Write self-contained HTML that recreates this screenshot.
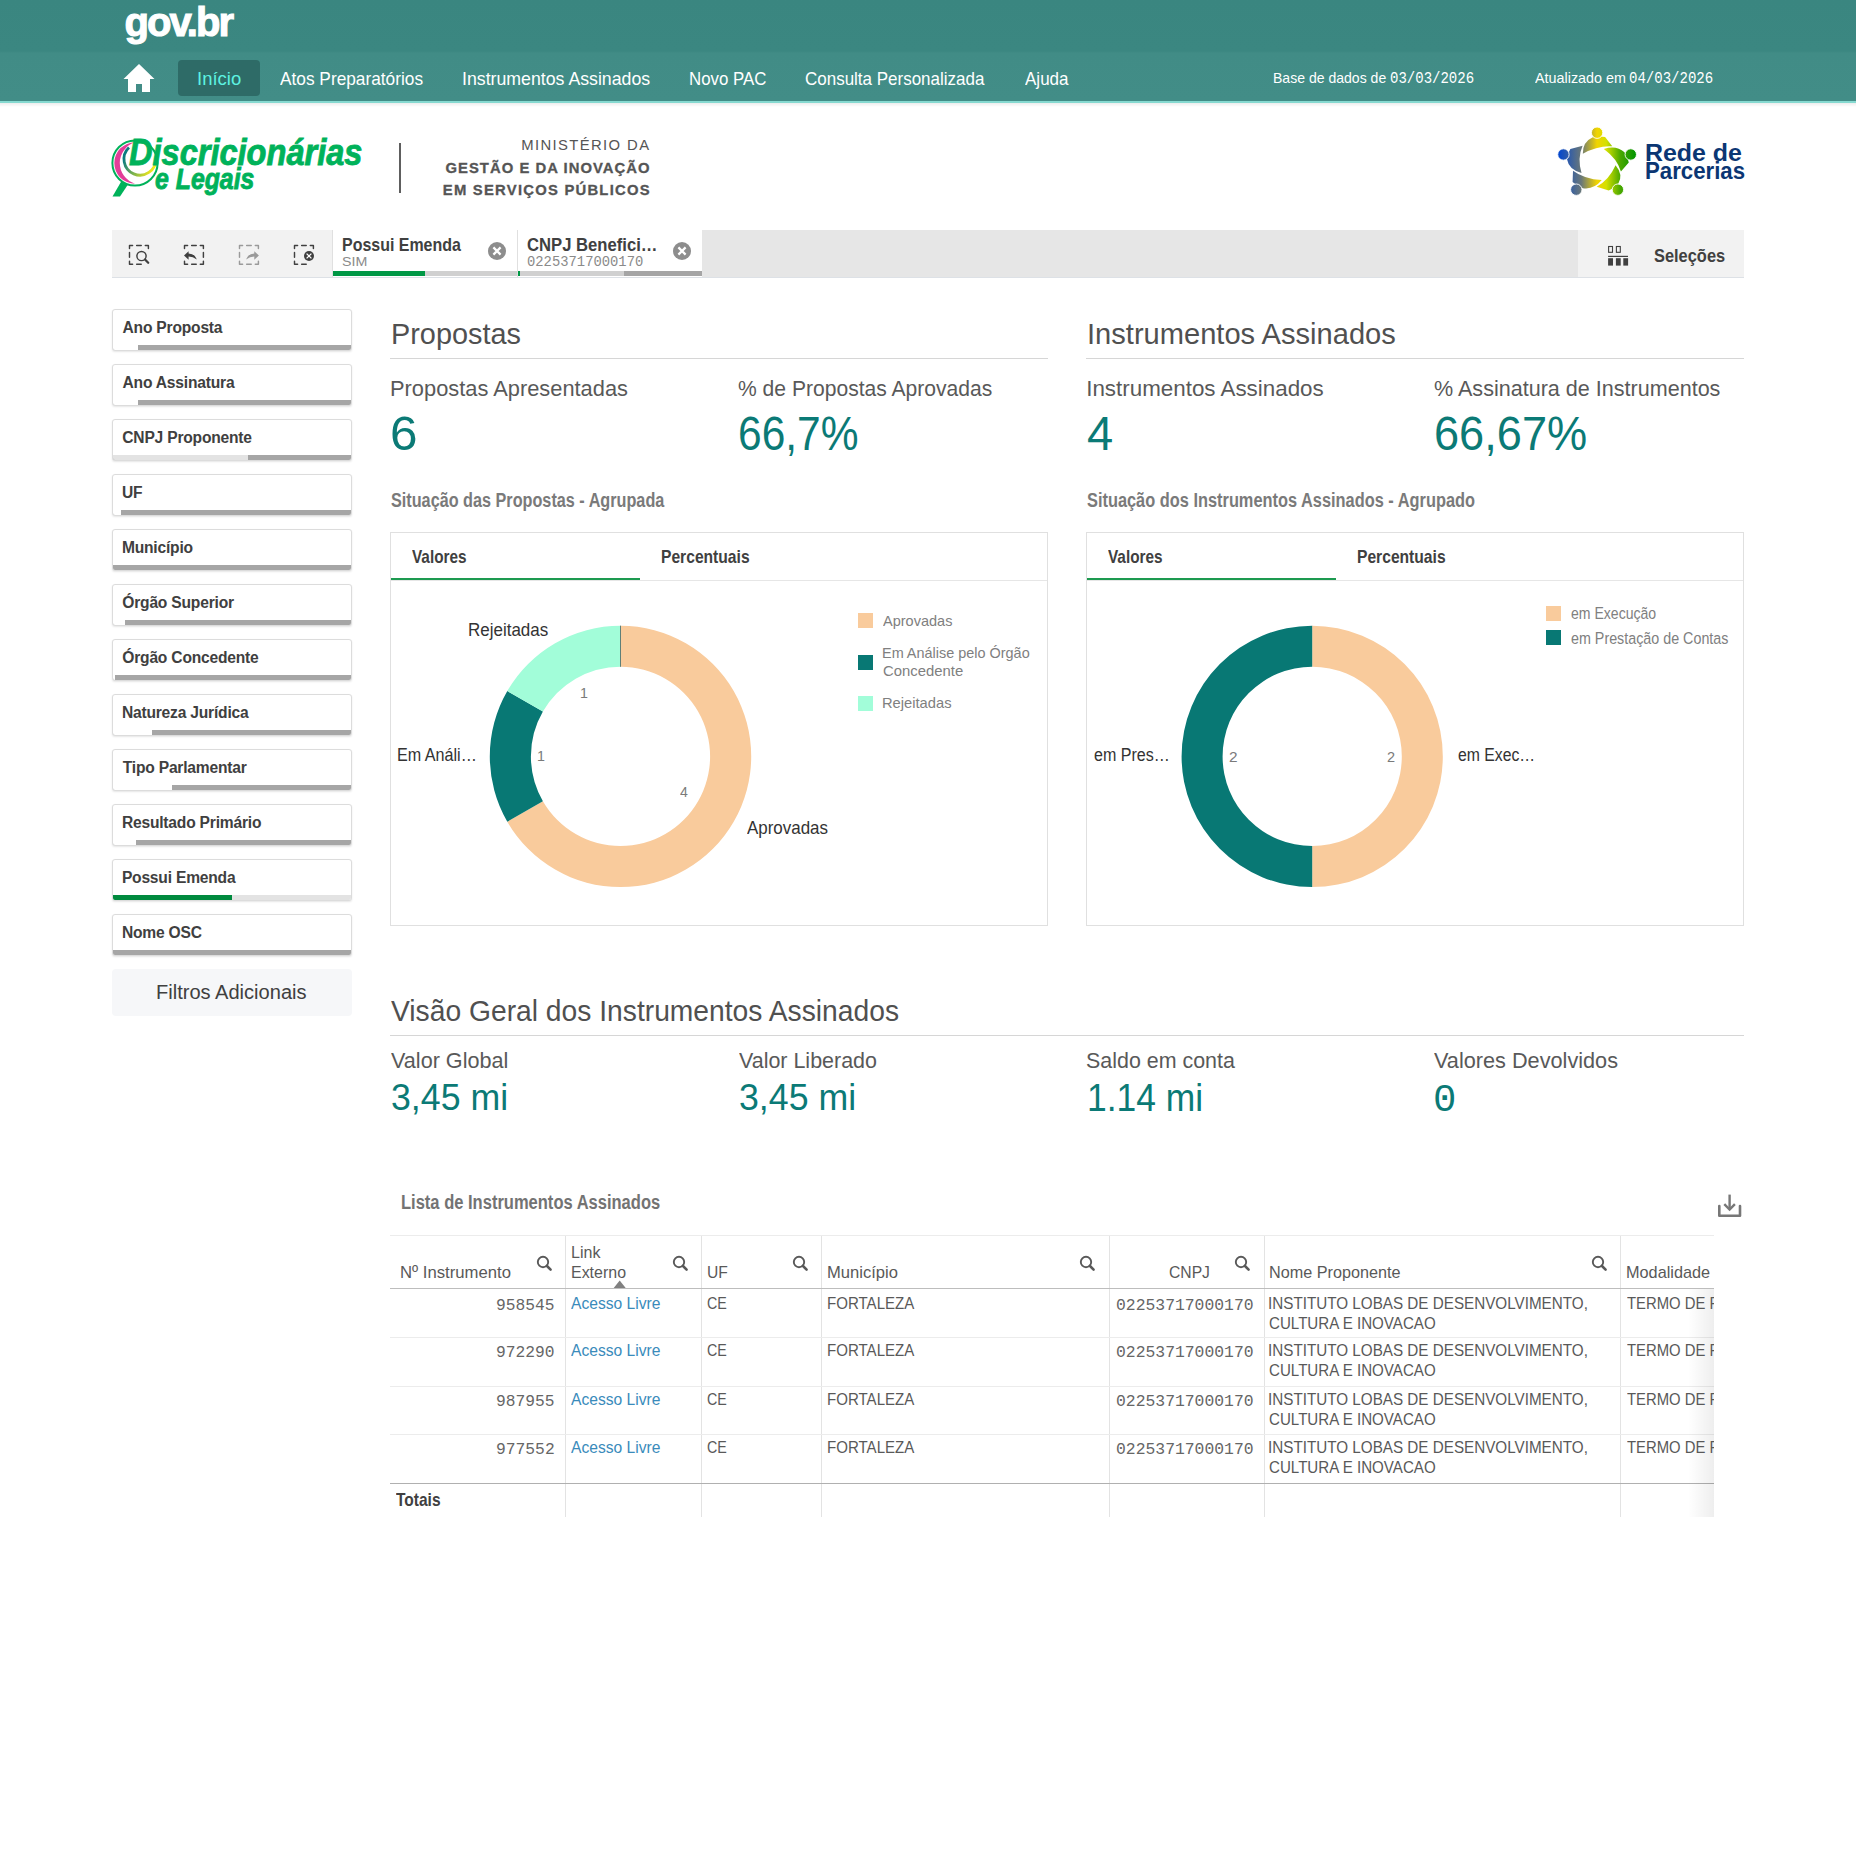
<!DOCTYPE html><html><head><meta charset="utf-8"><style>
html,body{margin:0;padding:0;background:#fff;}
body{width:1856px;height:1876px;position:relative;overflow:hidden;font-family:"Liberation Sans",sans-serif;}
.a{position:absolute;}
.t{position:absolute;line-height:1;white-space:nowrap;}
</style></head><body>
<div class="a" style="left:0;top:0;width:1856px;height:101px;background:linear-gradient(180deg,#3a8680 0px,#3b8781 51px,#418c86 53px,#428d87 101px)"></div>
<div class="a" style="left:0;top:101px;width:1856px;height:2px;background:#86d9d0"></div>
<div class="a" style="left:0;top:103px;width:1856px;height:4px;background:linear-gradient(180deg,rgba(0,0,0,0.07),rgba(0,0,0,0))"></div>
<div class="t" style="left:124.40px;top:2.43px;font-size:40.00px;letter-spacing:-1.900px;color:#ffffff;font-family:'Liberation Sans',sans-serif;font-weight:bold;font-style:normal;-webkit-text-stroke:1.1px #fff">gov.br</div>
<svg class="a" style="left:122px;top:63px" width="34" height="30" viewBox="0 0 34 30"><path d="M17 1 L1.5 16 L6 16 L6 29 L14 29 L14 21 L20 21 L20 29 L28 29 L28 16 L32.5 16 Z" fill="#fff"/></svg>
<div class="a" style="left:178px;top:60px;width:82px;height:36px;background:#2e6b67;border-radius:4px"></div>
<div class="t" style="left:196.84px;top:70.15px;font-size:18.60px;letter-spacing:0.000px;color:#5df2e1;font-family:'Liberation Sans',sans-serif;font-weight:normal;font-style:normal;transform:scaleX(0.9941);transform-origin:0 0;">Início</div>
<div class="t" style="left:280.30px;top:69.55px;font-size:18.60px;letter-spacing:0.000px;color:#ffffff;font-family:'Liberation Sans',sans-serif;font-weight:normal;font-style:normal;transform:scaleX(0.9290);transform-origin:0 0;">Atos Preparatórios</div>
<div class="t" style="left:461.60px;top:69.55px;font-size:18.60px;letter-spacing:0.000px;color:#ffffff;font-family:'Liberation Sans',sans-serif;font-weight:normal;font-style:normal;transform:scaleX(0.9531);transform-origin:0 0;">Instrumentos Assinados</div>
<div class="t" style="left:688.95px;top:69.55px;font-size:18.60px;letter-spacing:0.000px;color:#ffffff;font-family:'Liberation Sans',sans-serif;font-weight:normal;font-style:normal;transform:scaleX(0.9056);transform-origin:0 0;">Novo PAC</div>
<div class="t" style="left:805.15px;top:69.55px;font-size:18.60px;letter-spacing:0.000px;color:#ffffff;font-family:'Liberation Sans',sans-serif;font-weight:normal;font-style:normal;transform:scaleX(0.9134);transform-origin:0 0;">Consulta Personalizada</div>
<div class="t" style="left:1025.00px;top:69.55px;font-size:18.60px;letter-spacing:0.000px;color:#ffffff;font-family:'Liberation Sans',sans-serif;font-weight:normal;font-style:normal;transform:scaleX(0.9151);transform-origin:0 0;">Ajuda</div>
<div class="t" style="left:1273.38px;top:70.25px;font-size:15.41px;letter-spacing:0.000px;color:#ffffff;font-family:'Liberation Sans',sans-serif;font-weight:normal;font-style:normal;transform:scaleX(0.9115);transform-origin:0 0;">Base de dados de</div>
<div class="t" style="left:1389.76px;top:70.97px;font-size:16.09px;letter-spacing:0.000px;color:#ffffff;font-family:'Liberation Mono',monospace;font-weight:normal;font-style:normal;transform:scaleX(0.8716);transform-origin:0 0;">03/03/2026</div>
<div class="t" style="left:1535.00px;top:70.25px;font-size:15.41px;letter-spacing:0.000px;color:#ffffff;font-family:'Liberation Sans',sans-serif;font-weight:normal;font-style:normal;transform:scaleX(0.9309);transform-origin:0 0;">Atualizado em</div>
<div class="t" style="left:1628.66px;top:70.97px;font-size:16.09px;letter-spacing:0.000px;color:#ffffff;font-family:'Liberation Mono',monospace;font-weight:normal;font-style:normal;transform:scaleX(0.8726);transform-origin:0 0;">04/03/2026</div>
<svg class="a" style="left:100px;top:120px" width="300" height="90" viewBox="100 120 300 90">
<defs><linearGradient id="ia" gradientUnits="userSpaceOnUse" x1="128" y1="148" x2="157" y2="160">
<stop offset="0" stop-color="#0a7a80"/><stop offset="0.45" stop-color="#78b050"/><stop offset="1" stop-color="#f4ea1a"/></linearGradient></defs>
<circle cx="135" cy="163" r="22.6" fill="none" stroke="#00b25a" stroke-width="2.0"/>
<path d="M135 142.3 A20.7 20.7 0 0 0 135 183.7 A21.7 21.7 0 0 1 135 142.3 Z" fill="#e23d98"/>
<path d="M129 147.5 A16 16 0 1 0 156 159" fill="none" stroke="url(#ia)" stroke-width="2.8"/>
<path d="M121.5 181 L128 184.5 L120 196.5 L112.5 196.5 Z" fill="#00b25a"/>
</svg>
<div class="t" style="left:128.51px;top:135.04px;font-size:36.92px;letter-spacing:0.000px;color:#00b25a;font-family:'Liberation Sans',sans-serif;font-weight:bold;font-style:italic;transform:scaleX(0.8820);transform-origin:0 0;-webkit-text-stroke:0.9px #00b25a">Discricionárias</div>
<div class="t" style="left:154.75px;top:165.43px;font-size:28.78px;letter-spacing:0.000px;color:#00b25a;font-family:'Liberation Sans',sans-serif;font-weight:bold;font-style:italic;transform:scaleX(0.8634);transform-origin:0 0;-webkit-text-stroke:0.9px #00b25a">e Legais</div>
<div class="a" style="left:399.2px;top:142.5px;width:2.1px;height:50px;background:#5e5e5e;"></div>
<div class="t" style="left:521.21px;top:138.45px;font-size:14.83px;letter-spacing:1.383px;color:#555555;font-family:'Liberation Sans',sans-serif;font-weight:normal;font-style:normal;">MINISTÉRIO DA</div>
<div class="t" style="left:445.41px;top:160.95px;font-size:14.83px;letter-spacing:1.036px;color:#555555;font-family:'Liberation Sans',sans-serif;font-weight:bold;font-style:normal;-webkit-text-stroke:0.3px #555">GESTÃO E DA INOVAÇÃO</div>
<div class="t" style="left:442.84px;top:183.25px;font-size:14.83px;letter-spacing:1.226px;color:#555555;font-family:'Liberation Sans',sans-serif;font-weight:bold;font-style:normal;-webkit-text-stroke:0.3px #555">EM SERVIÇOS PÚBLICOS</div>
<svg class="a" style="left:1550px;top:120px" width="90" height="80" viewBox="1550 120 90 80">
<defs><linearGradient id="rg" gradientUnits="userSpaceOnUse" x1="1558" y1="0" x2="1636" y2="0">
<stop offset="0" stop-color="#0045d0"/><stop offset="0.30" stop-color="#6a7878"/><stop offset="0.50" stop-color="#f2d400"/><stop offset="0.62" stop-color="#d4e000"/><stop offset="0.80" stop-color="#4aa800"/><stop offset="1" stop-color="#009400"/></linearGradient></defs>
<g fill="url(#rg)"><path d="M1592.84 137.35 Q1598.70 135.74 1605.09 136.88 L1612.24 146.27 Q1597.42 145.41 1582.82 153.76 Q1582.60 141.90 1592.84 137.35 Z"/><circle cx="1597.10" cy="132.70" r="5.7" stroke="#fff" stroke-width="0.9"/><path d="M1624.47 152.29 Q1628.01 156.76 1628.77 162.52 L1620.94 171.47 Q1617.27 158.67 1603.84 148.88 Q1616.44 145.04 1624.47 152.29 Z"/><circle cx="1630.76" cy="154.47" r="5.7" stroke="#fff" stroke-width="0.9"/><path d="M1618.28 183.69 Q1614.60 188.06 1608.68 190.49 L1596.70 186.63 Q1609.25 179.56 1615.55 165.17 Q1623.55 174.65 1618.28 183.69 Z"/><circle cx="1617.90" cy="189.68" r="5.7" stroke="#fff" stroke-width="0.9"/><path d="M1582.82 188.15 Q1577.01 186.39 1572.59 182.12 L1573.01 170.79 Q1584.44 179.23 1601.76 180.12 Q1594.10 189.82 1582.82 188.15 Z"/><circle cx="1576.30" cy="189.68" r="5.7" stroke="#fff" stroke-width="0.9"/><path d="M1567.09 159.51 Q1567.18 154.05 1570.37 148.99 L1582.62 145.85 Q1577.13 158.12 1581.53 173.07 Q1568.80 169.58 1567.09 159.51 Z"/><circle cx="1563.44" cy="154.47" r="5.7" stroke="#fff" stroke-width="0.9"/></g></svg>
<div class="t" style="left:1644.58px;top:140.67px;font-size:24.13px;letter-spacing:0.000px;color:#0b3673;font-family:'Liberation Sans',sans-serif;font-weight:bold;font-style:normal;transform:scaleX(1.0331);transform-origin:0 0;">Rede de</div>
<div class="t" style="left:1644.76px;top:160.41px;font-size:23.26px;letter-spacing:0.000px;color:#0b3673;font-family:'Liberation Sans',sans-serif;font-weight:bold;font-style:normal;transform:scaleX(0.9558);transform-origin:0 0;">Parcerias</div>
<div class="a" style="left:112px;top:230px;width:1632px;height:47px;background:#e6e6e6;"></div>
<div class="a" style="left:112px;top:277px;width:1632px;height:1px;background:#dde1e6;"></div>
<div class="a" style="left:112px;top:230px;width:220px;height:47px;background:#f2f2f2;"></div>
<div class="a" style="left:1578px;top:230px;width:166px;height:47px;background:#f2f2f2;"></div>
<svg class="a" style="left:112px;top:230px" width="220" height="47" viewBox="112 230 220 47"><path d="M129.5 248.5 L129.5 245.4 L132.6 245.4 M145.3 245.4 L148.4 245.4 L148.4 248.5 M132.6 264.3 L129.5 264.3 L129.5 261.2 M136.64999999999998 245.4 L141.25 245.4 M136.64999999999998 264.3 L141.25 264.3 M129.5 252.54999999999998 L129.5 257.15" fill="none" stroke="#404040" stroke-width="1.45" stroke-linejoin="round" stroke-linecap="round"/><circle cx="141.5" cy="256" r="4.6" fill="none" stroke="#404040" stroke-width="1.45"/><path d="M145 259.5 L148.2 262.7" stroke="#404040" stroke-width="2.3" stroke-linecap="round"/><path d="M184.5 248.5 L184.5 245.4 L187.6 245.4 M200.3 245.4 L203.4 245.4 L203.4 248.5 M203.4 261.2 L203.4 264.3 L200.3 264.3 M187.6 264.3 L184.5 264.3 L184.5 261.2 M191.64999999999998 245.4 L196.25 245.4 M191.64999999999998 264.3 L196.25 264.3 M203.4 252.54999999999998 L203.4 257.15" fill="none" stroke="#404040" stroke-width="1.45" stroke-linejoin="round" stroke-linecap="round"/><path d="M184 255.5 L188.6 251.2 L188.6 253.4 Q194.5 253.4 196.8 259.6 Q193 256.6 188.6 256.6 L188.6 259.8 Z" fill="#404040"/><path d="M239.5 248.5 L239.5 245.4 L242.6 245.4 M255.29999999999998 245.4 L258.4 245.4 L258.4 248.5 M258.4 261.2 L258.4 264.3 L255.29999999999998 264.3 M242.6 264.3 L239.5 264.3 L239.5 261.2 M246.64999999999998 245.4 L251.25 245.4 M246.64999999999998 264.3 L251.25 264.3 M239.5 252.54999999999998 L239.5 257.15" fill="none" stroke="#9a9a9a" stroke-width="1.45" stroke-linejoin="round" stroke-linecap="round"/><path d="M258.9 255.5 L254.3 251.2 L254.3 253.4 Q248.4 253.4 246.1 259.6 Q249.9 256.6 254.3 256.6 L254.3 259.8 Z" fill="#9a9a9a"/><path d="M294.5 248.5 L294.5 245.4 L297.6 245.4 M310.29999999999995 245.4 L313.4 245.4 L313.4 248.5 M297.6 264.3 L294.5 264.3 L294.5 261.2 M301.65 245.4 L306.25 245.4 M301.65 264.3 L306.25 264.3 M294.5 252.54999999999998 L294.5 257.15" fill="none" stroke="#404040" stroke-width="1.45" stroke-linejoin="round" stroke-linecap="round"/><circle cx="309" cy="256" r="5" fill="#404040"/><path d="M306.6 253.6 L311.4 258.4 M311.4 253.6 L306.6 258.4" stroke="#fff" stroke-width="1.3"/></svg>
<div class="a" style="left:332px;top:230px;width:185.5px;height:47px;background:#ffffff;"></div>
<div class="a" style="left:332px;top:230px;width:1px;height:47px;background:#e0e0e0;"></div>
<div class="a" style="left:333px;top:271px;width:92px;height:5px;background:#009845;"></div>
<div class="a" style="left:425px;top:271px;width:92px;height:5px;background:#d0d0d0;"></div>
<div class="t" style="left:341.76px;top:235.92px;font-size:18.17px;letter-spacing:0.000px;color:#404040;font-family:'Liberation Sans',sans-serif;font-weight:bold;font-style:normal;transform:scaleX(0.8789);transform-origin:0 0;">Possui Emenda</div>
<div class="t" style="left:342.16px;top:255.18px;font-size:13.37px;letter-spacing:0.000px;color:#8a8a8a;font-family:'Liberation Sans',sans-serif;font-weight:normal;font-style:normal;transform:scaleX(1.0651);transform-origin:0 0;">SIM</div>
<div class="a" style="left:517.5px;top:230px;width:184.5px;height:47px;background:#ffffff;"></div>
<div class="a" style="left:517px;top:230px;width:1px;height:47px;background:#e0e0e0;"></div>
<div class="a" style="left:518px;top:271px;width:2px;height:5px;background:#009845;"></div>
<div class="a" style="left:520px;top:271px;width:104px;height:5px;background:#d0d0d0;"></div>
<div class="a" style="left:624px;top:271px;width:78px;height:5px;background:#a5a5a5;"></div>
<div class="t" style="left:527.33px;top:236.02px;font-size:18.17px;letter-spacing:0.000px;color:#404040;font-family:'Liberation Sans',sans-serif;font-weight:bold;font-style:normal;transform:scaleX(0.9167);transform-origin:0 0;">CNPJ Benefici…</div>
<div class="t" style="left:527.17px;top:255.25px;font-size:14.42px;letter-spacing:0.000px;color:#8a8a8a;font-family:'Liberation Mono',monospace;font-weight:normal;font-style:normal;transform:scaleX(0.9605);transform-origin:0 0;">02253717000170</div>
<svg class="a" style="left:487px;top:241.3px" width="20" height="20" viewBox="-10 -10 20 20"><circle r="9" fill="#8d8d8d"/><path d="M-3.6 -3.6 L3.6 3.6 M3.6 -3.6 L-3.6 3.6" stroke="#fff" stroke-width="2.2"/></svg>
<svg class="a" style="left:672px;top:241.2px" width="20" height="20" viewBox="-10 -10 20 20"><circle r="9" fill="#8d8d8d"/><path d="M-3.6 -3.6 L3.6 3.6 M3.6 -3.6 L-3.6 3.6" stroke="#fff" stroke-width="2.2"/></svg>
<svg class="a" style="left:1600px;top:240px" width="36" height="32" viewBox="1600 240 36 32"><rect x="1608.6" y="246.5" width="3.9" height="5.8" fill="none" stroke="#404040" stroke-width="1.1"/><rect x="1616.4" y="246.5" width="3.9" height="5.8" fill="none" stroke="#404040" stroke-width="1.1"/><rect x="1608.1" y="255.8" width="19.9" height="1.2" fill="#404040"/><rect x="1608.1" y="258.2" width="4.9" height="7.4" fill="#404040"/><rect x="1615.9" y="258.2" width="4.8" height="7.4" fill="#404040"/><rect x="1623.3" y="258.2" width="4.8" height="7.4" fill="#404040"/></svg>
<div class="t" style="left:1654.01px;top:246.85px;font-size:18.60px;letter-spacing:0.000px;color:#404040;font-family:'Liberation Sans',sans-serif;font-weight:bold;font-style:normal;transform:scaleX(0.8822);transform-origin:0 0;">Seleções</div>
<div class="a" style="left:112px;top:309px;width:238px;height:40px;border:1px solid #dcdcdc;border-radius:3px;background:#fff;overflow:hidden;box-shadow:0 1px 2px rgba(0,0,0,0.10)"><div class="a" style="left:0;top:35px;width:238px;height:5px;background:#a6a6a6"></div><div class="a" style="left:0;top:35px;width:25px;height:5px;background:#ffffff"></div></div>
<div class="t" style="left:122.51px;top:320.19px;font-size:15.60px;letter-spacing:0.000px;color:#404040;font-family:'Liberation Sans',sans-serif;font-weight:bold;font-style:normal;letter-spacing:-0.2px">Ano Proposta</div>
<div class="a" style="left:112px;top:364px;width:238px;height:40px;border:1px solid #dcdcdc;border-radius:3px;background:#fff;overflow:hidden;box-shadow:0 1px 2px rgba(0,0,0,0.10)"><div class="a" style="left:0;top:35px;width:238px;height:5px;background:#a6a6a6"></div><div class="a" style="left:0;top:35px;width:25px;height:5px;background:#ffffff"></div></div>
<div class="t" style="left:122.51px;top:375.19px;font-size:15.60px;letter-spacing:0.000px;color:#404040;font-family:'Liberation Sans',sans-serif;font-weight:bold;font-style:normal;letter-spacing:-0.2px">Ano Assinatura</div>
<div class="a" style="left:112px;top:419px;width:238px;height:40px;border:1px solid #dcdcdc;border-radius:3px;background:#fff;overflow:hidden;box-shadow:0 1px 2px rgba(0,0,0,0.10)"><div class="a" style="left:0;top:35px;width:238px;height:5px;background:#a6a6a6"></div><div class="a" style="left:0;top:35px;width:135px;height:5px;background:#e3e3e3"></div></div>
<div class="t" style="left:122.28px;top:430.19px;font-size:15.60px;letter-spacing:0.000px;color:#404040;font-family:'Liberation Sans',sans-serif;font-weight:bold;font-style:normal;letter-spacing:-0.2px">CNPJ Proponente</div>
<div class="a" style="left:112px;top:474px;width:238px;height:40px;border:1px solid #dcdcdc;border-radius:3px;background:#fff;overflow:hidden;box-shadow:0 1px 2px rgba(0,0,0,0.10)"><div class="a" style="left:0;top:35px;width:238px;height:5px;background:#a6a6a6"></div><div class="a" style="left:0;top:35px;width:8px;height:5px;background:#ffffff"></div></div>
<div class="t" style="left:121.96px;top:485.19px;font-size:15.60px;letter-spacing:0.000px;color:#404040;font-family:'Liberation Sans',sans-serif;font-weight:bold;font-style:normal;letter-spacing:-0.2px">UF</div>
<div class="a" style="left:112px;top:529px;width:238px;height:40px;border:1px solid #dcdcdc;border-radius:3px;background:#fff;overflow:hidden;box-shadow:0 1px 2px rgba(0,0,0,0.10)"><div class="a" style="left:0;top:35px;width:238px;height:5px;background:#a6a6a6"></div><div class="a" style="left:0;top:35px;width:0px;height:5px;background:#ffffff"></div></div>
<div class="t" style="left:121.89px;top:540.19px;font-size:15.60px;letter-spacing:0.000px;color:#404040;font-family:'Liberation Sans',sans-serif;font-weight:bold;font-style:normal;letter-spacing:-0.2px">Município</div>
<div class="a" style="left:112px;top:584px;width:238px;height:40px;border:1px solid #dcdcdc;border-radius:3px;background:#fff;overflow:hidden;box-shadow:0 1px 2px rgba(0,0,0,0.10)"><div class="a" style="left:0;top:35px;width:238px;height:5px;background:#a6a6a6"></div><div class="a" style="left:0;top:35px;width:12px;height:5px;background:#ffffff"></div></div>
<div class="t" style="left:122.28px;top:595.19px;font-size:15.60px;letter-spacing:0.000px;color:#404040;font-family:'Liberation Sans',sans-serif;font-weight:bold;font-style:normal;letter-spacing:-0.2px">Órgão Superior</div>
<div class="a" style="left:112px;top:639px;width:238px;height:40px;border:1px solid #dcdcdc;border-radius:3px;background:#fff;overflow:hidden;box-shadow:0 1px 2px rgba(0,0,0,0.10)"><div class="a" style="left:0;top:35px;width:238px;height:5px;background:#a6a6a6"></div><div class="a" style="left:0;top:35px;width:2px;height:5px;background:#ffffff"></div></div>
<div class="t" style="left:122.28px;top:650.19px;font-size:15.60px;letter-spacing:0.000px;color:#404040;font-family:'Liberation Sans',sans-serif;font-weight:bold;font-style:normal;letter-spacing:-0.2px">Órgão Concedente</div>
<div class="a" style="left:112px;top:694px;width:238px;height:40px;border:1px solid #dcdcdc;border-radius:3px;background:#fff;overflow:hidden;box-shadow:0 1px 2px rgba(0,0,0,0.10)"><div class="a" style="left:0;top:35px;width:238px;height:5px;background:#a6a6a6"></div><div class="a" style="left:0;top:35px;width:39px;height:5px;background:#ffffff"></div></div>
<div class="t" style="left:121.89px;top:705.19px;font-size:15.60px;letter-spacing:0.000px;color:#404040;font-family:'Liberation Sans',sans-serif;font-weight:bold;font-style:normal;letter-spacing:-0.2px">Natureza Jurídica</div>
<div class="a" style="left:112px;top:749px;width:238px;height:40px;border:1px solid #dcdcdc;border-radius:3px;background:#fff;overflow:hidden;box-shadow:0 1px 2px rgba(0,0,0,0.10)"><div class="a" style="left:0;top:35px;width:238px;height:5px;background:#a6a6a6"></div><div class="a" style="left:0;top:35px;width:59px;height:5px;background:#ffffff"></div></div>
<div class="t" style="left:122.74px;top:760.19px;font-size:15.60px;letter-spacing:0.000px;color:#404040;font-family:'Liberation Sans',sans-serif;font-weight:bold;font-style:normal;letter-spacing:-0.2px">Tipo Parlamentar</div>
<div class="a" style="left:112px;top:804px;width:238px;height:40px;border:1px solid #dcdcdc;border-radius:3px;background:#fff;overflow:hidden;box-shadow:0 1px 2px rgba(0,0,0,0.10)"><div class="a" style="left:0;top:35px;width:238px;height:5px;background:#a6a6a6"></div><div class="a" style="left:0;top:35px;width:23px;height:5px;background:#ffffff"></div></div>
<div class="t" style="left:121.89px;top:815.19px;font-size:15.60px;letter-spacing:0.000px;color:#404040;font-family:'Liberation Sans',sans-serif;font-weight:bold;font-style:normal;letter-spacing:-0.2px">Resultado Primário</div>
<div class="a" style="left:112px;top:859px;width:238px;height:40px;border:1px solid #dcdcdc;border-radius:3px;background:#fff;overflow:hidden;box-shadow:0 1px 2px rgba(0,0,0,0.10)"><div class="a" style="left:0;top:35px;width:238px;height:5px;background:#e3e3e3"></div><div class="a" style="left:0;top:35px;width:119px;height:5px;background:#008a3e"></div></div>
<div class="t" style="left:121.89px;top:870.19px;font-size:15.60px;letter-spacing:0.000px;color:#404040;font-family:'Liberation Sans',sans-serif;font-weight:bold;font-style:normal;letter-spacing:-0.2px">Possui Emenda</div>
<div class="a" style="left:112px;top:914px;width:238px;height:40px;border:1px solid #dcdcdc;border-radius:3px;background:#fff;overflow:hidden;box-shadow:0 1px 2px rgba(0,0,0,0.10)"><div class="a" style="left:0;top:35px;width:238px;height:5px;background:#a6a6a6"></div><div class="a" style="left:0;top:35px;width:0px;height:5px;background:#ffffff"></div></div>
<div class="t" style="left:121.89px;top:925.19px;font-size:15.60px;letter-spacing:0.000px;color:#404040;font-family:'Liberation Sans',sans-serif;font-weight:bold;font-style:normal;letter-spacing:-0.2px">Nome OSC</div>
<div class="a" style="left:112px;top:969px;width:240px;height:47px;background:#f6f7f9;border-radius:4px"></div>
<div class="t" style="left:156.39px;top:981.77px;font-size:20.35px;letter-spacing:0.000px;color:#404040;font-family:'Liberation Sans',sans-serif;font-weight:normal;font-style:normal;transform:scaleX(0.9862);transform-origin:0 0;">Filtros Adicionais</div>
<div class="t" style="left:390.99px;top:319.03px;font-size:30.09px;letter-spacing:0.000px;color:#505050;font-family:'Liberation Sans',sans-serif;font-weight:normal;font-style:normal;transform:scaleX(0.9592);transform-origin:0 0;">Propostas</div>
<div class="a" style="left:390px;top:358px;width:658px;height:1px;background:#d6d6d6;"></div>
<div class="t" style="left:390.45px;top:377.55px;font-size:22.38px;letter-spacing:0.000px;color:#595959;font-family:'Liberation Sans',sans-serif;font-weight:normal;font-style:normal;transform:scaleX(0.9760);transform-origin:0 0;">Propostas Apresentadas</div>
<div class="t" style="left:389.53px;top:408.97px;font-size:48.69px;letter-spacing:0.000px;color:#0b7a76;font-family:'Liberation Sans',sans-serif;font-weight:normal;font-style:normal;transform:scaleX(1.0158);transform-origin:0 0;">6</div>
<div class="t" style="left:738.26px;top:377.55px;font-size:22.38px;letter-spacing:0.000px;color:#595959;font-family:'Liberation Sans',sans-serif;font-weight:normal;font-style:normal;transform:scaleX(0.9423);transform-origin:0 0;">% de Propostas Aprovadas</div>
<div class="t" style="left:738.37px;top:408.97px;font-size:48.69px;letter-spacing:0.000px;color:#0b7a76;font-family:'Liberation Sans',sans-serif;font-weight:normal;font-style:normal;transform:scaleX(0.8730);transform-origin:0 0;">66,7%</div>
<div class="t" style="left:390.51px;top:491.23px;font-size:19.33px;letter-spacing:0.000px;color:#7a7a7a;font-family:'Liberation Sans',sans-serif;font-weight:bold;font-style:normal;transform:scaleX(0.8389);transform-origin:0 0;">Situação das Propostas - Agrupada</div>
<div class="t" style="left:1086.68px;top:319.03px;font-size:30.09px;letter-spacing:0.000px;color:#505050;font-family:'Liberation Sans',sans-serif;font-weight:normal;font-style:normal;transform:scaleX(0.9670);transform-origin:0 0;">Instrumentos Assinados</div>
<div class="a" style="left:1086px;top:358px;width:658px;height:1px;background:#d6d6d6;"></div>
<div class="t" style="left:1086.19px;top:377.55px;font-size:22.38px;letter-spacing:0.000px;color:#595959;font-family:'Liberation Sans',sans-serif;font-weight:normal;font-style:normal;">Instrumentos Assinados</div>
<div class="t" style="left:1087.06px;top:408.97px;font-size:48.69px;letter-spacing:0.000px;color:#0b7a76;font-family:'Liberation Sans',sans-serif;font-weight:normal;font-style:normal;transform:scaleX(0.9665);transform-origin:0 0;">4</div>
<div class="t" style="left:1434.25px;top:377.55px;font-size:22.38px;letter-spacing:0.000px;color:#595959;font-family:'Liberation Sans',sans-serif;font-weight:normal;font-style:normal;transform:scaleX(0.9635);transform-origin:0 0;">% Assinatura de Instrumentos</div>
<div class="t" style="left:1434.24px;top:408.97px;font-size:48.69px;letter-spacing:0.000px;color:#0b7a76;font-family:'Liberation Sans',sans-serif;font-weight:normal;font-style:normal;transform:scaleX(0.9276);transform-origin:0 0;">66,67%</div>
<div class="t" style="left:1086.51px;top:491.23px;font-size:19.33px;letter-spacing:0.000px;color:#7a7a7a;font-family:'Liberation Sans',sans-serif;font-weight:bold;font-style:normal;transform:scaleX(0.8468);transform-origin:0 0;">Situação dos Instrumentos Assinados - Agrupado</div>
<div class="a" style="left:390px;top:532px;width:656px;height:392px;border:1px solid #e0e0e0;background:#fff"></div>
<div class="a" style="left:391px;top:579.5px;width:656px;height:1px;background:#e6e6e6;"></div>
<div class="a" style="left:391px;top:578px;width:249px;height:2px;background:#1d9a50;"></div>
<div class="t" style="left:412.12px;top:548.04px;font-size:18.02px;letter-spacing:0.000px;color:#404040;font-family:'Liberation Sans',sans-serif;font-weight:bold;font-style:normal;transform:scaleX(0.8504);transform-origin:0 0;">Valores</div>
<div class="t" style="left:660.98px;top:548.04px;font-size:18.02px;letter-spacing:0.000px;color:#404040;font-family:'Liberation Sans',sans-serif;font-weight:bold;font-style:normal;transform:scaleX(0.8674);transform-origin:0 0;">Percentuais</div>
<div class="a" style="left:1086px;top:532px;width:656px;height:392px;border:1px solid #e0e0e0;background:#fff"></div>
<div class="a" style="left:1087px;top:579.5px;width:656px;height:1px;background:#e6e6e6;"></div>
<div class="a" style="left:1087px;top:578px;width:249px;height:2px;background:#1d9a50;"></div>
<div class="t" style="left:1108.12px;top:548.04px;font-size:18.02px;letter-spacing:0.000px;color:#404040;font-family:'Liberation Sans',sans-serif;font-weight:bold;font-style:normal;transform:scaleX(0.8504);transform-origin:0 0;">Valores</div>
<div class="t" style="left:1356.98px;top:548.04px;font-size:18.02px;letter-spacing:0.000px;color:#404040;font-family:'Liberation Sans',sans-serif;font-weight:bold;font-style:normal;transform:scaleX(0.8674);transform-origin:0 0;">Percentuais</div>
<svg class="a" style="left:0;top:0" width="1856" height="1000" viewBox="0 0 1856 1000"><path d="M620.50 625.70 A130.7 130.7 0 1 1 507.31 821.75 L542.90 801.20 A89.6 89.6 0 1 0 620.50 666.80 Z" fill="#f9cb9c"/><path d="M507.31 821.75 A130.7 130.7 0 0 1 507.31 691.05 L542.90 711.60 A89.6 89.6 0 0 0 542.90 801.20 Z" fill="#087874"/><path d="M507.31 691.05 A130.7 130.7 0 0 1 620.50 625.70 L620.50 666.80 A89.6 89.6 0 0 0 542.90 711.60 Z" fill="#a2fdd9"/><rect x="620.0" y="625.7" width="1" height="41.099999999999994" fill="#5f7f78"/><path d="M1312.20 625.70 A130.7 130.7 0 0 1 1312.20 887.10 L1312.20 846.00 A89.6 89.6 0 0 0 1312.20 666.80 Z" fill="#f9cb9c"/><path d="M1312.20 887.10 A130.7 130.7 0 0 1 1312.20 625.70 L1312.20 666.80 A89.6 89.6 0 0 0 1312.20 846.00 Z" fill="#087874"/></svg>
<div class="t" style="left:468.14px;top:621.34px;font-size:18.02px;letter-spacing:0.000px;color:#333333;font-family:'Liberation Sans',sans-serif;font-weight:normal;font-style:normal;transform:scaleX(0.9424);transform-origin:0 0;">Rejeitadas</div>
<div class="t" style="left:397.21px;top:746.02px;font-size:18.17px;letter-spacing:0.000px;color:#333333;font-family:'Liberation Sans',sans-serif;font-weight:normal;font-style:normal;transform:scaleX(0.8890);transform-origin:0 0;">Em Análi…</div>
<div class="t" style="left:746.60px;top:819.25px;font-size:18.60px;letter-spacing:0.000px;color:#333333;font-family:'Liberation Sans',sans-serif;font-weight:normal;font-style:normal;transform:scaleX(0.9107);transform-origin:0 0;">Aprovadas</div>
<div class="t" style="left:579.63px;top:685.75px;font-size:14.83px;letter-spacing:0.000px;color:#7a7a7a;font-family:'Liberation Sans',sans-serif;font-weight:normal;font-style:normal;transform:scaleX(0.9614);transform-origin:0 0;">1</div>
<div class="t" style="left:537.13px;top:748.55px;font-size:14.83px;letter-spacing:0.000px;color:#7a7a7a;font-family:'Liberation Sans',sans-serif;font-weight:normal;font-style:normal;transform:scaleX(0.9614);transform-origin:0 0;">1</div>
<div class="t" style="left:679.82px;top:784.82px;font-size:14.97px;letter-spacing:0.000px;color:#7a7a7a;font-family:'Liberation Sans',sans-serif;font-weight:normal;font-style:normal;transform:scaleX(0.9430);transform-origin:0 0;">4</div>
<div class="a" style="left:858px;top:613.3px;width:15px;height:15px;background:#f9cb9c;"></div>
<div class="a" style="left:858px;top:654.8px;width:15px;height:15px;background:#087874;"></div>
<div class="a" style="left:858px;top:695.7px;width:15px;height:15px;background:#a2fdd9;"></div>
<div class="t" style="left:883.30px;top:613.35px;font-size:15.41px;letter-spacing:0.000px;color:#808080;font-family:'Liberation Sans',sans-serif;font-weight:normal;font-style:normal;transform:scaleX(0.9425);transform-origin:0 0;">Aprovadas</div>
<div class="t" style="left:882.14px;top:645.35px;font-size:15.41px;letter-spacing:0.000px;color:#808080;font-family:'Liberation Sans',sans-serif;font-weight:normal;font-style:normal;transform:scaleX(0.9371);transform-origin:0 0;">Em Análise pelo Órgão</div>
<div class="t" style="left:882.56px;top:663.35px;font-size:15.41px;letter-spacing:0.000px;color:#808080;font-family:'Liberation Sans',sans-serif;font-weight:normal;font-style:normal;transform:scaleX(0.9650);transform-origin:0 0;">Concedente</div>
<div class="t" style="left:882.12px;top:695.05px;font-size:15.41px;letter-spacing:0.000px;color:#808080;font-family:'Liberation Sans',sans-serif;font-weight:normal;font-style:normal;transform:scaleX(0.9546);transform-origin:0 0;">Rejeitadas</div>
<div class="t" style="left:1093.56px;top:746.34px;font-size:18.02px;letter-spacing:0.000px;color:#333333;font-family:'Liberation Sans',sans-serif;font-weight:normal;font-style:normal;transform:scaleX(0.8914);transform-origin:0 0;">em Pres…</div>
<div class="t" style="left:1457.57px;top:746.34px;font-size:18.02px;letter-spacing:0.000px;color:#333333;font-family:'Liberation Sans',sans-serif;font-weight:normal;font-style:normal;transform:scaleX(0.8755);transform-origin:0 0;">em Exec…</div>
<div class="t" style="left:1228.93px;top:748.50px;font-size:15.12px;letter-spacing:0.000px;color:#7a7a7a;font-family:'Liberation Sans',sans-serif;font-weight:normal;font-style:normal;transform:scaleX(1.0178);transform-origin:0 0;">2</div>
<div class="t" style="left:1386.67px;top:748.50px;font-size:15.12px;letter-spacing:0.000px;color:#7a7a7a;font-family:'Liberation Sans',sans-serif;font-weight:normal;font-style:normal;transform:scaleX(0.9596);transform-origin:0 0;">2</div>
<div class="a" style="left:1546px;top:605.5px;width:15px;height:15px;background:#f9cb9c;"></div>
<div class="a" style="left:1546px;top:630.3px;width:15px;height:15px;background:#087874;"></div>
<div class="t" style="left:1571.14px;top:604.94px;font-size:16.13px;letter-spacing:0.000px;color:#808080;font-family:'Liberation Sans',sans-serif;font-weight:normal;font-style:normal;transform:scaleX(0.8727);transform-origin:0 0;">em Execução</div>
<div class="t" style="left:1571.13px;top:629.64px;font-size:16.13px;letter-spacing:0.000px;color:#808080;font-family:'Liberation Sans',sans-serif;font-weight:normal;font-style:normal;transform:scaleX(0.8880);transform-origin:0 0;">em Prestação de Contas</div>
<div class="t" style="left:390.86px;top:996.66px;font-size:28.63px;letter-spacing:0.000px;color:#505050;font-family:'Liberation Sans',sans-serif;font-weight:normal;font-style:normal;transform:scaleX(0.9864);transform-origin:0 0;">Visão Geral dos Instrumentos Assinados</div>
<div class="a" style="left:390px;top:1034.5px;width:1354px;height:1px;background:#d6d6d6;"></div>
<div class="t" style="left:390.69px;top:1049.18px;font-size:22.82px;letter-spacing:0.000px;color:#595959;font-family:'Liberation Sans',sans-serif;font-weight:normal;font-style:normal;transform:scaleX(0.9476);transform-origin:0 0;">Valor Global</div>
<div class="t" style="left:391.35px;top:1079.45px;font-size:37.50px;letter-spacing:0.000px;color:#0b7a76;font-family:'Liberation Sans',sans-serif;font-weight:normal;font-style:normal;transform:scaleX(0.9524);transform-origin:0 0;">3,45 mi</div>
<div class="t" style="left:739.39px;top:1049.18px;font-size:22.82px;letter-spacing:0.000px;color:#595959;font-family:'Liberation Sans',sans-serif;font-weight:normal;font-style:normal;transform:scaleX(0.9403);transform-origin:0 0;">Valor Liberado</div>
<div class="t" style="left:739.35px;top:1079.45px;font-size:37.50px;letter-spacing:0.000px;color:#0b7a76;font-family:'Liberation Sans',sans-serif;font-weight:normal;font-style:normal;transform:scaleX(0.9524);transform-origin:0 0;">3,45 mi</div>
<div class="t" style="left:1085.64px;top:1048.96px;font-size:22.97px;letter-spacing:0.000px;color:#595959;font-family:'Liberation Sans',sans-serif;font-weight:normal;font-style:normal;transform:scaleX(0.9327);transform-origin:0 0;">Saldo em conta</div>
<div class="t" style="left:1087.04px;top:1079.26px;font-size:38.08px;letter-spacing:0.000px;color:#0b7a76;font-family:'Liberation Sans',sans-serif;font-weight:normal;font-style:normal;transform:scaleX(0.9298);transform-origin:0 0;">1.14 mi</div>
<div class="t" style="left:1434.49px;top:1048.96px;font-size:22.97px;letter-spacing:0.000px;color:#595959;font-family:'Liberation Sans',sans-serif;font-weight:normal;font-style:normal;transform:scaleX(0.9441);transform-origin:0 0;">Valores Devolvidos</div>
<div class="t" style="left:1433.16px;top:1081.73px;font-size:38.86px;letter-spacing:0.000px;color:#0b7a76;font-family:'Liberation Mono',monospace;font-weight:normal;font-style:normal;transform:scaleX(1.0024);transform-origin:0 0;">0</div>
<div class="t" style="left:401.43px;top:1192.66px;font-size:19.77px;letter-spacing:0.000px;color:#737373;font-family:'Liberation Sans',sans-serif;font-weight:bold;font-style:normal;transform:scaleX(0.8358);transform-origin:0 0;">Lista de Instrumentos Assinados</div>
<svg class="a" style="left:1714px;top:1190px" width="32" height="32" viewBox="1714 1190 32 32"><path d="M1719.3 1206 L1719.3 1215.8 L1740 1215.8 L1740 1206" fill="none" stroke="#777" stroke-width="2.6" stroke-linejoin="round" stroke-linecap="round"/><path d="M1729.6 1194.6 L1729.6 1209" stroke="#777" stroke-width="2.4"/><path d="M1724.3 1204.2 L1729.6 1209.6 L1734.9 1204.2" fill="none" stroke="#777" stroke-width="2.4"/></svg>
<div class="a" style="left:390px;top:1235px;width:1324px;height:1px;background:#ececec;"></div>
<div class="a" style="left:565px;top:1236px;width:1px;height:281px;background:#e3e3e3;"></div>
<div class="a" style="left:701px;top:1236px;width:1px;height:281px;background:#e3e3e3;"></div>
<div class="a" style="left:821px;top:1236px;width:1px;height:281px;background:#e3e3e3;"></div>
<div class="a" style="left:1109px;top:1236px;width:1px;height:281px;background:#e3e3e3;"></div>
<div class="a" style="left:1264px;top:1236px;width:1px;height:281px;background:#e3e3e3;"></div>
<div class="a" style="left:1620px;top:1236px;width:1px;height:281px;background:#e3e3e3;"></div>
<div class="a" style="left:390px;top:1288px;width:1324px;height:1px;background:#bdbdbd;"></div>
<div class="a" style="left:390px;top:1337px;width:1324px;height:1px;background:#ececec;"></div>
<div class="a" style="left:390px;top:1385.5px;width:1324px;height:1px;background:#ececec;"></div>
<div class="a" style="left:390px;top:1434.2px;width:1324px;height:1px;background:#ececec;"></div>
<div class="a" style="left:390px;top:1482.5px;width:1324px;height:1.5px;background:#b0b0b0;"></div>
<div class="a" style="left:1688px;top:1289px;width:26px;height:228px;background:linear-gradient(90deg,rgba(0,0,0,0),rgba(0,0,0,0.065))"></div>
<div class="t" style="left:400.06px;top:1263.98px;font-size:17.15px;letter-spacing:0.000px;color:#595959;font-family:'Liberation Sans',sans-serif;font-weight:normal;font-style:normal;transform:scaleX(0.9740);transform-origin:0 0;">Nº Instrumento</div>
<div class="t" style="left:570.81px;top:1244.38px;font-size:17.15px;letter-spacing:0.000px;color:#595959;font-family:'Liberation Sans',sans-serif;font-weight:normal;font-style:normal;transform:scaleX(0.9369);transform-origin:0 0;">Link</div>
<div class="t" style="left:570.82px;top:1263.98px;font-size:17.15px;letter-spacing:0.000px;color:#595959;font-family:'Liberation Sans',sans-serif;font-weight:normal;font-style:normal;transform:scaleX(0.9311);transform-origin:0 0;">Externo</div>
<div class="t" style="left:706.53px;top:1263.98px;font-size:17.15px;letter-spacing:0.000px;color:#595959;font-family:'Liberation Sans',sans-serif;font-weight:normal;font-style:normal;transform:scaleX(0.9118);transform-origin:0 0;">UF</div>
<div class="t" style="left:826.67px;top:1263.98px;font-size:17.15px;letter-spacing:0.000px;color:#595959;font-family:'Liberation Sans',sans-serif;font-weight:normal;font-style:normal;transform:scaleX(0.9671);transform-origin:0 0;">Município</div>
<div class="t" style="left:1169.22px;top:1263.98px;font-size:17.15px;letter-spacing:0.000px;color:#595959;font-family:'Liberation Sans',sans-serif;font-weight:normal;font-style:normal;transform:scaleX(0.9150);transform-origin:0 0;">CNPJ</div>
<div class="t" style="left:1268.50px;top:1263.98px;font-size:17.15px;letter-spacing:0.000px;color:#595959;font-family:'Liberation Sans',sans-serif;font-weight:normal;font-style:normal;transform:scaleX(0.9451);transform-origin:0 0;">Nome Proponente</div>
<div class="t" style="left:1625.50px;top:1263.98px;font-size:17.15px;letter-spacing:0.000px;color:#595959;font-family:'Liberation Sans',sans-serif;font-weight:normal;font-style:normal;transform:scaleX(0.9490);transform-origin:0 0;">Modalidade</div>
<svg class="a" style="left:534.5px;top:1254px" width="18" height="18" viewBox="-9 -9 18 18"><circle cx="-1" cy="-1" r="5.2" fill="none" stroke="#595959" stroke-width="1.9"/><path d="M3 3 L6.6 6.6" stroke="#595959" stroke-width="2.6" stroke-linecap="round"/></svg>
<svg class="a" style="left:670.5px;top:1254px" width="18" height="18" viewBox="-9 -9 18 18"><circle cx="-1" cy="-1" r="5.2" fill="none" stroke="#595959" stroke-width="1.9"/><path d="M3 3 L6.6 6.6" stroke="#595959" stroke-width="2.6" stroke-linecap="round"/></svg>
<svg class="a" style="left:790.5px;top:1254px" width="18" height="18" viewBox="-9 -9 18 18"><circle cx="-1" cy="-1" r="5.2" fill="none" stroke="#595959" stroke-width="1.9"/><path d="M3 3 L6.6 6.6" stroke="#595959" stroke-width="2.6" stroke-linecap="round"/></svg>
<svg class="a" style="left:1078px;top:1254px" width="18" height="18" viewBox="-9 -9 18 18"><circle cx="-1" cy="-1" r="5.2" fill="none" stroke="#595959" stroke-width="1.9"/><path d="M3 3 L6.6 6.6" stroke="#595959" stroke-width="2.6" stroke-linecap="round"/></svg>
<svg class="a" style="left:1233px;top:1254px" width="18" height="18" viewBox="-9 -9 18 18"><circle cx="-1" cy="-1" r="5.2" fill="none" stroke="#595959" stroke-width="1.9"/><path d="M3 3 L6.6 6.6" stroke="#595959" stroke-width="2.6" stroke-linecap="round"/></svg>
<svg class="a" style="left:1589.5px;top:1254px" width="18" height="18" viewBox="-9 -9 18 18"><circle cx="-1" cy="-1" r="5.2" fill="none" stroke="#595959" stroke-width="1.9"/><path d="M3 3 L6.6 6.6" stroke="#595959" stroke-width="2.6" stroke-linecap="round"/></svg>
<svg class="a" style="left:612px;top:1279px" width="16" height="10" viewBox="612 1279 16 10"><path d="M613.7 1288 L619.7 1280.4 L625.7 1288 Z" fill="#808080"/></svg>
<div class="t" style="left:496.06px;top:1296.57px;font-size:17.00px;letter-spacing:0.000px;color:#666666;font-family:'Liberation Mono',monospace;font-weight:normal;font-style:normal;transform:scaleX(0.9559);transform-origin:0 0;">958545</div>
<div class="t" style="left:571.40px;top:1295.57px;font-size:16.57px;letter-spacing:0.000px;color:#3a8bbb;font-family:'Liberation Sans',sans-serif;font-weight:normal;font-style:normal;transform:scaleX(0.9437);transform-origin:0 0;">Acesso Livre</div>
<div class="t" style="left:706.99px;top:1295.57px;font-size:16.57px;letter-spacing:0.000px;color:#595959;font-family:'Liberation Sans',sans-serif;font-weight:normal;font-style:normal;transform:scaleX(0.8622);transform-origin:0 0;">CE</div>
<div class="t" style="left:826.79px;top:1295.57px;font-size:16.57px;letter-spacing:0.000px;color:#595959;font-family:'Liberation Sans',sans-serif;font-weight:normal;font-style:normal;transform:scaleX(0.9092);transform-origin:0 0;">FORTALEZA</div>
<div class="t" style="left:1116.42px;top:1296.57px;font-size:17.00px;letter-spacing:0.000px;color:#666666;font-family:'Liberation Mono',monospace;font-weight:normal;font-style:normal;transform:scaleX(0.9632);transform-origin:0 0;">02253717000170</div>
<div class="t" style="left:1268.33px;top:1295.57px;font-size:16.57px;letter-spacing:0.000px;color:#595959;font-family:'Liberation Sans',sans-serif;font-weight:normal;font-style:normal;transform:scaleX(0.9195);transform-origin:0 0;">INSTITUTO LOBAS DE DESENVOLVIMENTO,</div>
<div class="t" style="left:1268.94px;top:1315.57px;font-size:16.57px;letter-spacing:0.000px;color:#595959;font-family:'Liberation Sans',sans-serif;font-weight:normal;font-style:normal;transform:scaleX(0.9131);transform-origin:0 0;">CULTURA E INOVACAO</div>
<div class="a" style="left:1621px;top:1289px;width:93px;height:30px;overflow:hidden">
<div class="t" style="left:5.50px;top:6.57px;font-size:16.57px;letter-spacing:0.000px;color:#595959;font-family:'Liberation Sans',sans-serif;font-weight:normal;font-style:normal;transform:scaleX(0.8963);transform-origin:0 0;">TERMO DE FOMENTO</div>
</div>
<div class="t" style="left:496.06px;top:1344.47px;font-size:17.00px;letter-spacing:0.000px;color:#666666;font-family:'Liberation Mono',monospace;font-weight:normal;font-style:normal;transform:scaleX(0.9559);transform-origin:0 0;">972290</div>
<div class="t" style="left:571.40px;top:1343.47px;font-size:16.57px;letter-spacing:0.000px;color:#3a8bbb;font-family:'Liberation Sans',sans-serif;font-weight:normal;font-style:normal;transform:scaleX(0.9437);transform-origin:0 0;">Acesso Livre</div>
<div class="t" style="left:706.99px;top:1343.47px;font-size:16.57px;letter-spacing:0.000px;color:#595959;font-family:'Liberation Sans',sans-serif;font-weight:normal;font-style:normal;transform:scaleX(0.8622);transform-origin:0 0;">CE</div>
<div class="t" style="left:826.79px;top:1343.47px;font-size:16.57px;letter-spacing:0.000px;color:#595959;font-family:'Liberation Sans',sans-serif;font-weight:normal;font-style:normal;transform:scaleX(0.9092);transform-origin:0 0;">FORTALEZA</div>
<div class="t" style="left:1116.42px;top:1344.47px;font-size:17.00px;letter-spacing:0.000px;color:#666666;font-family:'Liberation Mono',monospace;font-weight:normal;font-style:normal;transform:scaleX(0.9632);transform-origin:0 0;">02253717000170</div>
<div class="t" style="left:1268.33px;top:1343.47px;font-size:16.57px;letter-spacing:0.000px;color:#595959;font-family:'Liberation Sans',sans-serif;font-weight:normal;font-style:normal;transform:scaleX(0.9195);transform-origin:0 0;">INSTITUTO LOBAS DE DESENVOLVIMENTO,</div>
<div class="t" style="left:1268.94px;top:1363.47px;font-size:16.57px;letter-spacing:0.000px;color:#595959;font-family:'Liberation Sans',sans-serif;font-weight:normal;font-style:normal;transform:scaleX(0.9131);transform-origin:0 0;">CULTURA E INOVACAO</div>
<div class="a" style="left:1621px;top:1336.9px;width:93px;height:30px;overflow:hidden">
<div class="t" style="left:5.50px;top:6.57px;font-size:16.57px;letter-spacing:0.000px;color:#595959;font-family:'Liberation Sans',sans-serif;font-weight:normal;font-style:normal;transform:scaleX(0.8963);transform-origin:0 0;">TERMO DE FOMENTO</div>
</div>
<div class="t" style="left:496.06px;top:1393.47px;font-size:17.00px;letter-spacing:0.000px;color:#666666;font-family:'Liberation Mono',monospace;font-weight:normal;font-style:normal;transform:scaleX(0.9559);transform-origin:0 0;">987955</div>
<div class="t" style="left:571.40px;top:1392.47px;font-size:16.57px;letter-spacing:0.000px;color:#3a8bbb;font-family:'Liberation Sans',sans-serif;font-weight:normal;font-style:normal;transform:scaleX(0.9437);transform-origin:0 0;">Acesso Livre</div>
<div class="t" style="left:706.99px;top:1392.47px;font-size:16.57px;letter-spacing:0.000px;color:#595959;font-family:'Liberation Sans',sans-serif;font-weight:normal;font-style:normal;transform:scaleX(0.8622);transform-origin:0 0;">CE</div>
<div class="t" style="left:826.79px;top:1392.47px;font-size:16.57px;letter-spacing:0.000px;color:#595959;font-family:'Liberation Sans',sans-serif;font-weight:normal;font-style:normal;transform:scaleX(0.9092);transform-origin:0 0;">FORTALEZA</div>
<div class="t" style="left:1116.42px;top:1393.47px;font-size:17.00px;letter-spacing:0.000px;color:#666666;font-family:'Liberation Mono',monospace;font-weight:normal;font-style:normal;transform:scaleX(0.9632);transform-origin:0 0;">02253717000170</div>
<div class="t" style="left:1268.33px;top:1392.47px;font-size:16.57px;letter-spacing:0.000px;color:#595959;font-family:'Liberation Sans',sans-serif;font-weight:normal;font-style:normal;transform:scaleX(0.9195);transform-origin:0 0;">INSTITUTO LOBAS DE DESENVOLVIMENTO,</div>
<div class="t" style="left:1268.94px;top:1412.47px;font-size:16.57px;letter-spacing:0.000px;color:#595959;font-family:'Liberation Sans',sans-serif;font-weight:normal;font-style:normal;transform:scaleX(0.9131);transform-origin:0 0;">CULTURA E INOVACAO</div>
<div class="a" style="left:1621px;top:1385.9px;width:93px;height:30px;overflow:hidden">
<div class="t" style="left:5.50px;top:6.57px;font-size:16.57px;letter-spacing:0.000px;color:#595959;font-family:'Liberation Sans',sans-serif;font-weight:normal;font-style:normal;transform:scaleX(0.8963);transform-origin:0 0;">TERMO DE FOMENTO</div>
</div>
<div class="t" style="left:496.06px;top:1441.37px;font-size:17.00px;letter-spacing:0.000px;color:#666666;font-family:'Liberation Mono',monospace;font-weight:normal;font-style:normal;transform:scaleX(0.9587);transform-origin:0 0;">977552</div>
<div class="t" style="left:571.40px;top:1440.37px;font-size:16.57px;letter-spacing:0.000px;color:#3a8bbb;font-family:'Liberation Sans',sans-serif;font-weight:normal;font-style:normal;transform:scaleX(0.9437);transform-origin:0 0;">Acesso Livre</div>
<div class="t" style="left:706.99px;top:1440.37px;font-size:16.57px;letter-spacing:0.000px;color:#595959;font-family:'Liberation Sans',sans-serif;font-weight:normal;font-style:normal;transform:scaleX(0.8622);transform-origin:0 0;">CE</div>
<div class="t" style="left:826.79px;top:1440.37px;font-size:16.57px;letter-spacing:0.000px;color:#595959;font-family:'Liberation Sans',sans-serif;font-weight:normal;font-style:normal;transform:scaleX(0.9092);transform-origin:0 0;">FORTALEZA</div>
<div class="t" style="left:1116.42px;top:1441.37px;font-size:17.00px;letter-spacing:0.000px;color:#666666;font-family:'Liberation Mono',monospace;font-weight:normal;font-style:normal;transform:scaleX(0.9632);transform-origin:0 0;">02253717000170</div>
<div class="t" style="left:1268.33px;top:1440.37px;font-size:16.57px;letter-spacing:0.000px;color:#595959;font-family:'Liberation Sans',sans-serif;font-weight:normal;font-style:normal;transform:scaleX(0.9195);transform-origin:0 0;">INSTITUTO LOBAS DE DESENVOLVIMENTO,</div>
<div class="t" style="left:1268.94px;top:1460.37px;font-size:16.57px;letter-spacing:0.000px;color:#595959;font-family:'Liberation Sans',sans-serif;font-weight:normal;font-style:normal;transform:scaleX(0.9131);transform-origin:0 0;">CULTURA E INOVACAO</div>
<div class="a" style="left:1621px;top:1433.8px;width:93px;height:30px;overflow:hidden">
<div class="t" style="left:5.50px;top:6.57px;font-size:16.57px;letter-spacing:0.000px;color:#595959;font-family:'Liberation Sans',sans-serif;font-weight:normal;font-style:normal;transform:scaleX(0.8963);transform-origin:0 0;">TERMO DE FOMENTO</div>
</div>
<div class="t" style="left:396.14px;top:1492.29px;font-size:17.73px;letter-spacing:0.000px;color:#404040;font-family:'Liberation Sans',sans-serif;font-weight:bold;font-style:normal;transform:scaleX(0.8759);transform-origin:0 0;">Totais</div>
</body></html>
